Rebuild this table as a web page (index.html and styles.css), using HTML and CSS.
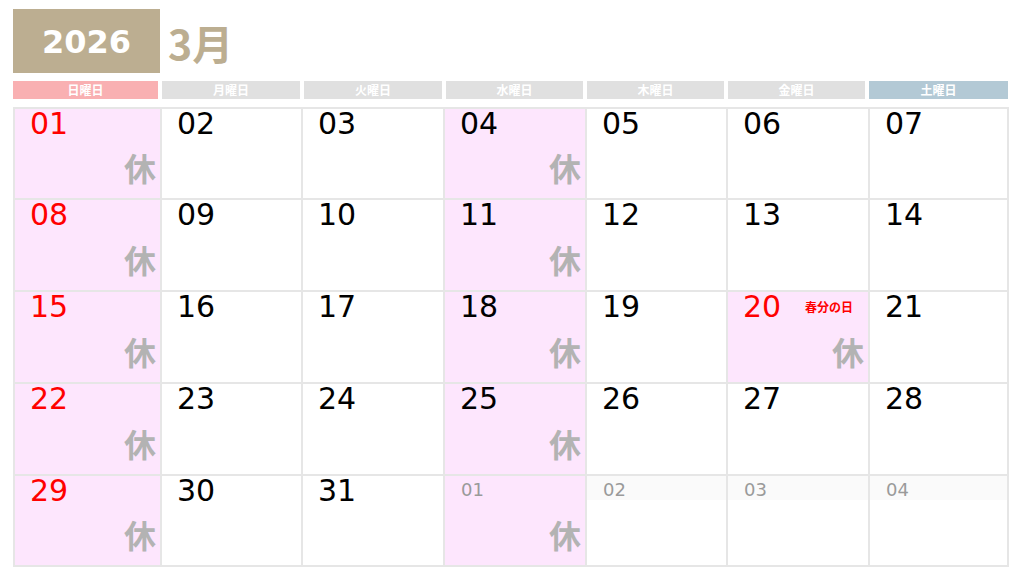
FILE: index.html
```html
<!DOCTYPE html>
<html lang="ja">
<head>
<meta charset="utf-8">
<title>2026年3月 カレンダー</title>
<link rel="stylesheet" href="styles.css">
</head>
<body>
<div class="page">
  <div class="title">
    <div class="year">2026</div>
    <div class="month">3月</div>
  </div>
  <div class="weekdays">
    <div class="wd sun">日曜日</div>
    <div class="wd">月曜日</div>
    <div class="wd">火曜日</div>
    <div class="wd">水曜日</div>
    <div class="wd">木曜日</div>
    <div class="wd">金曜日</div>
    <div class="wd sat">土曜日</div>
  </div>
  <div class="grid">
    <div class="cell off red"><div class="top"><span class="num">01</span></div><span class="kyu">休</span></div>
    <div class="cell"><div class="top"><span class="num">02</span></div></div>
    <div class="cell"><div class="top"><span class="num">03</span></div></div>
    <div class="cell off"><div class="top"><span class="num">04</span></div><span class="kyu">休</span></div>
    <div class="cell"><div class="top"><span class="num">05</span></div></div>
    <div class="cell"><div class="top"><span class="num">06</span></div></div>
    <div class="cell"><div class="top"><span class="num">07</span></div></div>

    <div class="cell off red"><div class="top"><span class="num">08</span></div><span class="kyu">休</span></div>
    <div class="cell"><div class="top"><span class="num">09</span></div></div>
    <div class="cell"><div class="top"><span class="num">10</span></div></div>
    <div class="cell off"><div class="top"><span class="num">11</span></div><span class="kyu">休</span></div>
    <div class="cell"><div class="top"><span class="num">12</span></div></div>
    <div class="cell"><div class="top"><span class="num">13</span></div></div>
    <div class="cell"><div class="top"><span class="num">14</span></div></div>

    <div class="cell off red"><div class="top"><span class="num">15</span></div><span class="kyu">休</span></div>
    <div class="cell"><div class="top"><span class="num">16</span></div></div>
    <div class="cell"><div class="top"><span class="num">17</span></div></div>
    <div class="cell off"><div class="top"><span class="num">18</span></div><span class="kyu">休</span></div>
    <div class="cell"><div class="top"><span class="num">19</span></div></div>
    <div class="cell off red"><div class="top"><span class="num">20</span><span class="holiday">春分の日</span></div><span class="kyu">休</span></div>
    <div class="cell"><div class="top"><span class="num">21</span></div></div>

    <div class="cell off red"><div class="top"><span class="num">22</span></div><span class="kyu">休</span></div>
    <div class="cell"><div class="top"><span class="num">23</span></div></div>
    <div class="cell"><div class="top"><span class="num">24</span></div></div>
    <div class="cell off"><div class="top"><span class="num">25</span></div><span class="kyu">休</span></div>
    <div class="cell"><div class="top"><span class="num">26</span></div></div>
    <div class="cell"><div class="top"><span class="num">27</span></div></div>
    <div class="cell"><div class="top"><span class="num">28</span></div></div>

    <div class="cell off red"><div class="top"><span class="num">29</span></div><span class="kyu">休</span></div>
    <div class="cell"><div class="top"><span class="num">30</span></div></div>
    <div class="cell"><div class="top"><span class="num">31</span></div></div>
    <div class="cell off next"><div class="top"><span class="num">01</span></div><span class="kyu">休</span></div>
    <div class="cell next band"><div class="top"><span class="num">02</span></div></div>
    <div class="cell next band"><div class="top"><span class="num">03</span></div></div>
    <div class="cell next band"><div class="top"><span class="num">04</span></div></div>
  </div>
</div>
</body>
</html>
```

FILE: styles.css
```css
html, body {
  margin: 0;
  padding: 0;
  background: #ffffff;
}

.page {
  padding: 9px 0 0 13px;
  width: 996px;
}

.title {
  display: flex;
  align-items: center;
  gap: 8px;
  height: 64px;
}

.year {
  width: 147px;
  height: 64px;
  background: #bcae91;
  color: #ffffff;
  font-family: "DejaVu Sans", sans-serif;
  font-weight: bold;
  font-size: 32px;
  display: flex;
  align-items: center;
  justify-content: center;
  padding-top: 1px;
  box-sizing: border-box;
}

.month {
  color: #bcae91;
  font-family: "Noto Sans CJK JP", sans-serif;
  font-weight: bold;
  font-size: 41px;
  line-height: 1;
  padding-top: 3px;
}

.weekdays {
  margin-top: 8px;
  display: grid;
  grid-template-columns: 145px 138px 138px 137px 137px 137px 139px;
  gap: 4px;
  height: 18px;
}

.wd {
  background: #e0e0e0;
  color: #ffffff;
  font-family: "Noto Sans CJK JP", sans-serif;
  font-weight: bold;
  font-size: 12px;
  line-height: 18px;
  text-align: center;
}

.wd.sun {
  background: #f9b0b2;
}

.wd.sat {
  background: #b3c9d5;
}

.grid {
  margin-top: 8px;
  display: grid;
  grid-template-columns: 145px 139px 140px 140px 139px 140px 137px;
  grid-template-rows: 89px 90px 90px 90px 89px;
  gap: 2px;
  border: 2px solid #e6e6e6;
  background: #e6e6e6;
  width: 992px;
}

.cell {
  background: #ffffff;
  display: flex;
  flex-direction: column;
  padding: 0 4px 0 15px;
}

.cell.off {
  background: #fde6fd;
}

.top {
  display: flex;
  align-items: center;
  justify-content: space-between;
  padding-right: 11px;
}

.num {
  font-family: "DejaVu Sans", sans-serif;
  font-size: 30px;
  line-height: 29px;
  color: #000000;
}

.red .num {
  color: #ff0000;
}

.holiday {
  font-family: "Noto Sans CJK JP", sans-serif;
  font-weight: bold;
  font-size: 12px;
  color: #ff0000;
}

.kyu {
  margin-top: auto;
  margin-bottom: 14px;
  align-self: flex-end;
  font-family: "Noto Sans CJK JP", sans-serif;
  font-weight: bold;
  font-size: 32px;
  line-height: 34px;
  color: #b3b3b3;
}

.next .num {
  font-size: 18px;
  line-height: 20px;
  color: #9a9a9a;
  padding-top: 4px;
}

.cell.next {
  padding-left: 16px;
}

.cell.band {
  background: linear-gradient(#fafafa 0, #fafafa 24px, #ffffff 24px);
}
```
